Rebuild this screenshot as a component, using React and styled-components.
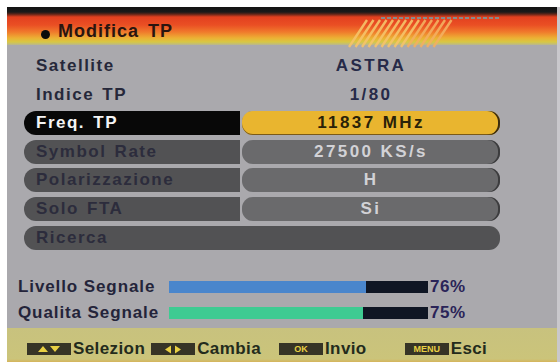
import React from 'react';
import styled, { createGlobalStyle } from 'styled-components';

const GlobalStyle = createGlobalStyle`
  body {
    margin: 0;
    background: #ffffff;
    font-family: 'Liberation Sans', Arial, sans-serif;
  }
`;

const Screen = styled.div`
  width: 550px;
  height: 355px;
  margin: 7px 0 0 7px;
  display: flex;
  flex-direction: column;
  background: #aaa9ad;
  box-shadow: 5px 0 0 #c9c8cc;
`;

const Header = styled.div`
  position: relative;
  height: 38px;
  flex: none;
  display: flex;
  align-items: flex-end;
  padding: 0 0 4px 34px;
  box-sizing: border-box;
  background: linear-gradient(
    to bottom,
    #121212 0px,
    #1a1a1a 5px,
    #5a2418 7px,
    #e2401f 10px,
    #ea4f24 18px,
    #f07a2c 25px,
    #ecb034 31px,
    #d8c844 35px,
    #b8b690 38px
  );
`;

const Dot = styled.span`
  width: 9px;
  height: 9px;
  border-radius: 50%;
  background: #0c0c0c;
  margin: 0 8px 0 0;
  position: relative;
  top: -2px;
`;

const Title = styled.h1`
  margin: 0;
  font-size: 18px;
  font-weight: bold;
  letter-spacing: 1px;
  word-spacing: 3px;
  color: #2a1510;
  line-height: 20px;
`;

const Deco = styled.svg`
  position: absolute;
  left: 336px;
  top: 2px;
`;

const Panel = styled.div`
  flex: 1;
  display: flex;
  flex-direction: column;
  padding: 9px 0 0 17px;
`;

const Rows = styled.div`
  display: flex;
  flex-direction: column;
  gap: 4.6px;
  width: 476px;
`;

const Row = styled.div`
  display: grid;
  grid-template-columns: 216px 258px;
  column-gap: 2px;
  height: 24px;
  font-size: 17px;
  font-weight: bold;
`;

const Label = styled.div`
  display: flex;
  align-items: center;
  padding-left: 12px;
  letter-spacing: 1.5px;
  word-spacing: 2px;
  border-radius: 12px 0 0 12px;
  color: ${({ tone }) =>
    tone === 'active' ? '#f4f4f4' : tone === 'plain' ? '#26283a' : '#2c2c3c'};
  background: ${({ tone }) =>
    tone === 'active' ? '#080808' : tone === 'plain' ? 'transparent' : '#525254'};
  ${({ full }) => full && 'grid-column: 1 / 3; border-radius: 12px 11px 11px 12px;'}
`;

const Value = styled.div`
  display: flex;
  align-items: center;
  justify-content: center;
  letter-spacing: 2.4px;
  border-radius: ${({ tone }) => (tone === 'plain' ? '0' : '11px')};
  color: ${({ tone }) =>
    tone === 'active' ? '#2a2208' : tone === 'plain' ? '#262a48' : '#d2d2d6'};
  background: ${({ tone }) =>
    tone === 'active' ? '#e9b52f' : tone === 'plain' ? 'transparent' : '#6a6a6c'};
  box-shadow: ${({ tone }) =>
    tone === 'active'
      ? 'inset -2px 0 0 #3a2c10, inset 0 -1px 0 #7a5a18'
      : tone === 'plain'
      ? 'none'
      : 'inset -2px 0 0 #3c3c3e'};
`;

const Signals = styled.div`
  margin-top: 27px;
  margin-left: -6px;
  display: flex;
  flex-direction: column;
  gap: 14px;
`;

const SignalRow = styled.div`
  display: grid;
  grid-template-columns: 151px 259px auto;
  align-items: center;
  height: 12px;
  font-size: 17px;
  font-weight: bold;
  letter-spacing: 0.9px;
  color: #24243a;
`;

const Track = styled.div`
  height: 12px;
  background: #0f1624;
  display: flex;
`;

const Fill = styled.div`
  height: 100%;
  background: ${({ color }) => color};
`;

const Percent = styled.span`
  padding-left: 2px;
  letter-spacing: 0.5px;
  color: #2a2458;
`;

const Footer = styled.div`
  height: 34px;
  flex: none;
  display: flex;
  align-items: center;
  padding: 8px 0 0 20px;
  box-sizing: border-box;
  background: linear-gradient(to bottom, #c8c27e 0px, #cbc47a 31px, #d6b45a 34px);
`;

const Hint = styled.div`
  display: flex;
  align-items: center;
  margin-right: ${({ gap }) => gap}px;
  font-size: 17px;
  font-weight: bold;
  letter-spacing: 0.4px;
  color: #232b1c;
`;

const Key = styled.span`
  width: 44px;
  height: 12px;
  margin-right: 2px;
  background: #363426;
  display: flex;
  align-items: center;
  justify-content: center;
  color: #e8d043;
  font-size: 9px;
  font-weight: bold;
  letter-spacing: 0;
`;

const rows = [
  { label: 'Freq. TP', value: '11837 MHz', tone: 'active' },
  { label: 'Symbol Rate', value: '27500 KS/s', tone: 'idle' },
  { label: 'Polarizzazione', value: 'H', tone: 'idle' },
  { label: 'Solo FTA', value: 'Si', tone: 'idle' },
];

const Stripes = () => (
  <Deco width="162" height="42" viewBox="0 0 162 42">
    {Array.from({ length: 20 }).map((_, i) => (
      <rect key={'d' + i} x={38 + i * 6} y="8" width="4" height="2" fill="#8a8a8a" />
    ))}
    {Array.from({ length: 14 }).map((_, i) => (
      <line
        key={i}
        x1={6 + i * 6.5}
        y1="38"
        x2={24 + i * 6.5}
        y2="11"
        stroke={i < 9 ? '#f6c46a' : '#f4b060'}
        strokeWidth="2.4"
        opacity="0.9"
      />
    ))}
  </Deco>
);

const App = () => (
  <>
    <GlobalStyle />
    <Screen>
      <Header>
        <Stripes />
        <Dot />
        <Title>Modifica TP</Title>
      </Header>
      <Panel>
        <Rows>
          <Row>
            <Label tone="plain">Satellite</Label>
            <Value tone="plain">ASTRA</Value>
          </Row>
          <Row>
            <Label tone="plain">Indice TP</Label>
            <Value tone="plain">1/80</Value>
          </Row>
          {rows.map((r) => (
            <Row key={r.label}>
              <Label tone={r.tone}>{r.label}</Label>
              <Value tone={r.tone}>{r.value}</Value>
            </Row>
          ))}
          <Row>
            <Label tone="idle" full>
              Ricerca
            </Label>
          </Row>
        </Rows>
        <Signals>
          <SignalRow>
            <span>Livello Segnale</span>
            <Track>
              <Fill color="#4a86cc" style={{ width: '76%' }} />
            </Track>
            <Percent>76%</Percent>
          </SignalRow>
          <SignalRow>
            <span>Qualita Segnale</span>
            <Track>
              <Fill color="#3ecb92" style={{ width: '75%' }} />
            </Track>
            <Percent>75%</Percent>
          </SignalRow>
        </Signals>
      </Panel>
      <Footer>
        <Hint gap={6}>
          <Key>
            <svg width="26" height="8" viewBox="0 0 26 8">
              <path d="M2 7 L7 1 L12 7 Z M14 1 L24 1 L19 7 Z" fill="#e8d043" />
            </svg>
          </Key>
          Selezion
        </Hint>
        <Hint gap={18}>
          <Key>
            <svg width="20" height="9" viewBox="0 0 20 9">
              <path d="M2 4.5 L8 0.5 L8 8.5 Z M12 0.5 L18 4.5 L12 8.5 Z" fill="#e8d043" />
            </svg>
          </Key>
          Cambia
        </Hint>
        <Hint gap={38}>
          <Key>OK</Key>
          Invio
        </Hint>
        <Hint gap={0}>
          <Key>MENU</Key>
          Esci
        </Hint>
      </Footer>
    </Screen>
  </>
);

export default App;
